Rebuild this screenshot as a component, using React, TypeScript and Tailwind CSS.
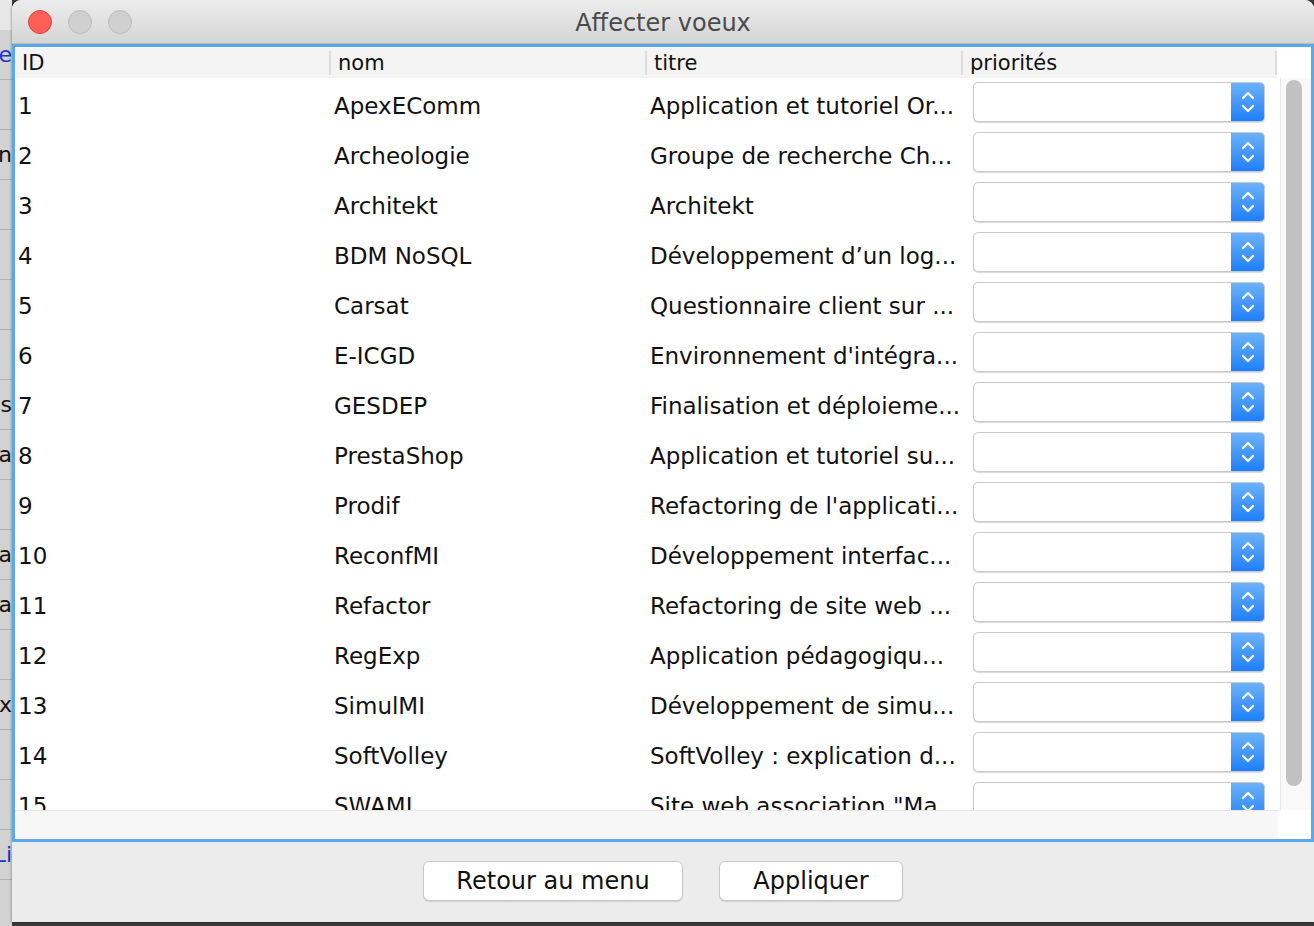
import React from "react";

type Row = { id: number; nom: string; titre: string };

const rows: Row[] = [
  { id: 1, nom: "ApexEComm", titre: "Application et tutoriel Or..." },
  { id: 2, nom: "Archeologie", titre: "Groupe de recherche Ch..." },
  { id: 3, nom: "Architekt", titre: "Architekt" },
  { id: 4, nom: "BDM NoSQL", titre: "Développement d’un log..." },
  { id: 5, nom: "Carsat", titre: "Questionnaire client sur ..." },
  { id: 6, nom: "E-ICGD", titre: "Environnement d'intégra..." },
  { id: 7, nom: "GESDEP", titre: "Finalisation et déploieme..." },
  { id: 8, nom: "PrestaShop", titre: "Application et tutoriel su..." },
  { id: 9, nom: "Prodif", titre: "Refactoring de l'applicati..." },
  { id: 10, nom: "ReconfMI", titre: "Développement interfac..." },
  { id: 11, nom: "Refactor", titre: "Refactoring de site web ..." },
  { id: 12, nom: "RegExp", titre: "Application pédagogiqu..." },
  { id: 13, nom: "SimulMI", titre: "Développement de simu..." },
  { id: 14, nom: "SoftVolley", titre: "SoftVolley : explication d..." },
  { id: 15, nom: "SWAMI", titre: "Site web association \"Ma..." },
];

// bits of the window lying behind the dialog
const behind = ["e", "", "n", "", "", "", "", "s", "ia", "", "a", "a", "", "x", "", "", "Li"];

const Combo = () => (
  <div className="flex h-[40px] w-[292px] overflow-hidden rounded-[5px] border border-[#c9c9c9] bg-white shadow-[0_1px_1px_rgba(0,0,0,0.15)]">
    <div className="flex-1" />
    <div className="flex w-[33px] items-center justify-center bg-gradient-to-b from-[#69b1fb] to-[#1b7ffb]">
      <svg width="16" height="26" viewBox="0 0 16 26" fill="none" stroke="white" strokeWidth="2.2" strokeLinecap="round" strokeLinejoin="round">
        <path d="M3 9 L8 4 L13 9" />
        <path d="M3 17 L8 22 L13 17" />
      </svg>
    </div>
  </div>
);

const HeaderCell = ({ label, last }: { label: string; last?: boolean }) => (
  <div className={`flex h-full items-center pl-[7px] ${last ? "w-[314px]" : "w-[316px]"}`}>
    <span className="flex-1">{label}</span>
    <span className="h-[24px] w-[2px] bg-[#dcdcdc]" />
  </div>
);

export default function App() {
  return (
    <div
      className="flex h-[926px] w-[1314px] overflow-hidden bg-[#3c3c3c] text-[#111]"
      style={{ fontFamily: '"DejaVu Sans", "Liberation Sans", sans-serif' }}
    >
      {/* window behind */}
      <div className="flex w-[12px] flex-col bg-[#d2d2d2]">
        <div className="h-[30px] bg-[#e8e8e8]" />
        {behind.map((t, i) => (
          <div key={i} className="flex h-[50px] items-center justify-end overflow-hidden border-b border-[#b0b0b0] text-[22px] text-[#111]">
            <span className={i === 0 || i === 16 ? "text-[#1a35c8]" : ""}>{t}</span>
          </div>
        ))}
      </div>

      {/* dialog */}
      <div className="flex h-[922px] w-[1302px] flex-col rounded-t-[9px] bg-[#ececec] shadow-[0_0_3px_rgba(0,0,0,0.5)]">
        <div className="relative flex h-[44px] items-center justify-center rounded-t-[9px] border-b border-[#b9b9b9] bg-gradient-to-b from-[#ececec] to-[#d5d5d5]">
          <div className="absolute left-[16px] top-[10px] flex gap-[16px]">
            <span className="h-[24px] w-[24px] rounded-full border border-[#e0443e] bg-[#fe5f57]" />
            <span className="h-[24px] w-[24px] rounded-full border border-[#bcbcbc] bg-[#d0d0d0]" />
            <span className="h-[24px] w-[24px] rounded-full border border-[#bcbcbc] bg-[#d0d0d0]" />
          </div>
          <span className="pt-[2px] text-[24px] text-[#4b4b4b]">Affecter voeux</span>
        </div>

        {/* table scroll pane */}
        <div className="flex h-[798px] flex-col border-[3px] border-[#5ba8ea] bg-white pt-[1px]">
          <div className="flex h-[30px] text-[21px] leading-none">
            <div className="flex h-full bg-[#f4f4f4]">
              <HeaderCell label="ID" />
              <HeaderCell label="nom" />
              <HeaderCell label="titre" />
              <HeaderCell label="priorités" last />
            </div>
          </div>

          <div className="flex h-[732px]">
            <div className="flex-1 overflow-hidden pt-[3px] text-[23px]">
              {rows.map((r) => (
                <div key={r.id} className="flex h-[50px] items-center">
                  <div className="w-[316px] pl-[3px]">{r.id}</div>
                  <div className="w-[316px] pl-[3px]">{r.nom}</div>
                  <div className="w-[316px] overflow-hidden whitespace-nowrap pl-[3px]">{r.titre}</div>
                  <div className="flex h-full w-[314px] items-start pl-[10px] pt-[1px]">
                    <Combo />
                  </div>
                </div>
              ))}
            </div>
            <div className="flex w-[31px] justify-start border-l border-[#e8e8e8] bg-[#f9f9f9] pl-[5px] pt-[2px]">
              <div className="h-[706px] w-[16px] rounded-full bg-[#c1c1c1]" />
            </div>
          </div>

          <div className="flex flex-1">
            <div className="flex-1 border-t border-[#e6e6e6] bg-[#f7f7f7]" />
            <div className="w-[33px] bg-white" />
          </div>
        </div>

        {/* buttons */}
        <div className="flex flex-1 items-start justify-center gap-[36px] pt-[19px] text-[24px]">
          <button className="h-[40px] w-[260px] rounded-[6px] border border-[#c8c8c8] bg-white shadow-[0_1px_1px_rgba(0,0,0,0.12)]">
            Retour au menu
          </button>
          <button className="h-[40px] w-[184px] rounded-[6px] border border-[#c8c8c8] bg-white shadow-[0_1px_1px_rgba(0,0,0,0.12)]">
            Appliquer
          </button>
        </div>
      </div>
    </div>
  );
}
